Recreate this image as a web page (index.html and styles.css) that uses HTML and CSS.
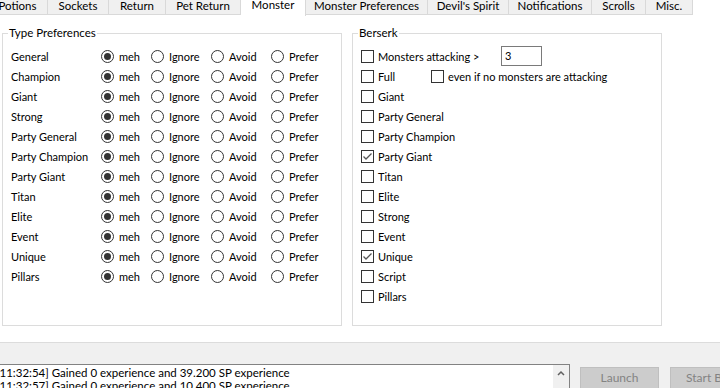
FILE: index.html
```html
<!DOCTYPE html>
<html lang="en">

<head>
    <meta charset="UTF-8">
    <meta name="viewport" content="width=device-width, initial-scale=1.0">
    <title>Bot Settings - Monster</title>
    <link rel="stylesheet" href="styles.css">
</head>

<body>
    <nav class="tabs">
        <div class="tab first">Potions</div>
        <div class="tab w61">Sockets</div>
        <div class="tab w57">Return</div>
        <div class="tab w75">Pet Return</div>
        <div class="tab active w65">Monster</div>
        <div class="tab w122">Monster Preferences</div>
        <div class="tab w81">Devil's Spirit</div>
        <div class="tab w83">Notifications</div>
        <div class="tab w54">Scrolls</div>
        <div class="tab w47">Misc.</div>
    </nav>

    <div class="page">
        <fieldset class="group types">
            <legend>Type Preferences</legend>
            <div class="pref"><span class="name">General</span><span class="opt o50"><i class="rb on"></i>meh</span><span class="opt"><i class="rb"></i>Ignore</span><span class="opt"><i class="rb"></i>Avoid</span><span class="opt"><i class="rb"></i>Prefer</span></div>
            <div class="pref"><span class="name">Champion</span><span class="opt o50"><i class="rb on"></i>meh</span><span class="opt"><i class="rb"></i>Ignore</span><span class="opt"><i class="rb"></i>Avoid</span><span class="opt"><i class="rb"></i>Prefer</span></div>
            <div class="pref"><span class="name">Giant</span><span class="opt o50"><i class="rb on"></i>meh</span><span class="opt"><i class="rb"></i>Ignore</span><span class="opt"><i class="rb"></i>Avoid</span><span class="opt"><i class="rb"></i>Prefer</span></div>
            <div class="pref"><span class="name">Strong</span><span class="opt o50"><i class="rb on"></i>meh</span><span class="opt"><i class="rb"></i>Ignore</span><span class="opt"><i class="rb"></i>Avoid</span><span class="opt"><i class="rb"></i>Prefer</span></div>
            <div class="pref"><span class="name">Party General</span><span class="opt o50"><i class="rb on"></i>meh</span><span class="opt"><i class="rb"></i>Ignore</span><span class="opt"><i class="rb"></i>Avoid</span><span class="opt"><i class="rb"></i>Prefer</span></div>
            <div class="pref"><span class="name">Party Champion</span><span class="opt o50"><i class="rb on"></i>meh</span><span class="opt"><i class="rb"></i>Ignore</span><span class="opt"><i class="rb"></i>Avoid</span><span class="opt"><i class="rb"></i>Prefer</span></div>
            <div class="pref"><span class="name">Party Giant</span><span class="opt o50"><i class="rb on"></i>meh</span><span class="opt"><i class="rb"></i>Ignore</span><span class="opt"><i class="rb"></i>Avoid</span><span class="opt"><i class="rb"></i>Prefer</span></div>
            <div class="pref"><span class="name">Titan</span><span class="opt o50"><i class="rb on"></i>meh</span><span class="opt"><i class="rb"></i>Ignore</span><span class="opt"><i class="rb"></i>Avoid</span><span class="opt"><i class="rb"></i>Prefer</span></div>
            <div class="pref"><span class="name">Elite</span><span class="opt o50"><i class="rb on"></i>meh</span><span class="opt"><i class="rb"></i>Ignore</span><span class="opt"><i class="rb"></i>Avoid</span><span class="opt"><i class="rb"></i>Prefer</span></div>
            <div class="pref"><span class="name">Event</span><span class="opt o50"><i class="rb on"></i>meh</span><span class="opt"><i class="rb"></i>Ignore</span><span class="opt"><i class="rb"></i>Avoid</span><span class="opt"><i class="rb"></i>Prefer</span></div>
            <div class="pref"><span class="name">Unique</span><span class="opt o50"><i class="rb on"></i>meh</span><span class="opt"><i class="rb"></i>Ignore</span><span class="opt"><i class="rb"></i>Avoid</span><span class="opt"><i class="rb"></i>Prefer</span></div>
            <div class="pref"><span class="name">Pillars</span><span class="opt o50"><i class="rb on"></i>meh</span><span class="opt"><i class="rb"></i>Ignore</span><span class="opt"><i class="rb"></i>Avoid</span><span class="opt"><i class="rb"></i>Prefer</span></div>
        </fieldset>

        <fieldset class="group berserk">
            <legend>Berserk</legend>
            <div class="row"><span class="check w140"><i class="cb"></i>Monsters attacking &gt;</span><span class="num">3</span></div>
            <div class="row"><span class="check w70"><i class="cb"></i>Full</span><span class="check"><i class="cb"></i>even if no monsters are attacking</span></div>
            <div class="row"><span class="check"><i class="cb"></i>Giant</span></div>
            <div class="row"><span class="check"><i class="cb"></i>Party General</span></div>
            <div class="row"><span class="check"><i class="cb"></i>Party Champion</span></div>
            <div class="row"><span class="check"><i class="cb on"><svg viewBox="0 0 11 11"><polyline points="1.5,5.5 4,8 9.5,2.5" /></svg></i>Party Giant</span></div>
            <div class="row"><span class="check"><i class="cb"></i>Titan</span></div>
            <div class="row"><span class="check"><i class="cb"></i>Elite</span></div>
            <div class="row"><span class="check"><i class="cb"></i>Strong</span></div>
            <div class="row"><span class="check"><i class="cb"></i>Event</span></div>
            <div class="row"><span class="check"><i class="cb on"><svg viewBox="0 0 11 11"><polyline points="1.5,5.5 4,8 9.5,2.5" /></svg></i>Unique</span></div>
            <div class="row"><span class="check"><i class="cb"></i>Script</span></div>
            <div class="row"><span class="check"><i class="cb"></i>Pillars</span></div>
        </fieldset>
    </div>

    <div class="bottom">
        <div class="log">
            <div class="lines">
                <div>[11:32:54] Gained 0 experience and 39.200 SP experience</div>
                <div>[11:32:57] Gained 0 experience and 10.400 SP experience</div>
            </div>
            <div class="scroll">
                <svg viewBox="0 0 16 10"><polyline points="5,7 8,4 11,7" /></svg>
            </div>
        </div>
        <button class="btn" disabled>Launch</button>
        <button class="btn" disabled>Start Bot</button>
    </div>
</body>

</html>
```

FILE: styles.css
```css
* {
    margin: 0;
    padding: 0;
    box-sizing: border-box;
}

body {
    width: 720px;
    height: 388px;
    overflow: hidden;
    background: #fff;
    color: #000;
    font-family: Lato, "Noto Sans", sans-serif;
    font-size: 11px;
}

/* tab strip */

.tabs {
    display: flex;
    height: 16px;
    overflow: hidden;
    font-size: 11.5px;
}

.tab {
    height: 15px;
    line-height: 12px;
    text-align: center;
    white-space: nowrap;
    background: #f0f0f0;
    border-right: 1px solid #d9d9d9;
    border-bottom: 1px solid #d9d9d9;
    flex-shrink: 0;
}

.tab.first {
    width: 60px;
    margin-left: -12px;
}

.tab.active {
    background: #fff;
    height: 16px;
    line-height: 10px;
    border-bottom: none;
}

.w47 { width: 47px; }
.w54 { width: 54px; }
.w57 { width: 57px; }
.w61 { width: 61px; }
.w65 { width: 65px; }
.w75 { width: 75px; }
.w81 { width: 81px; }
.w83 { width: 83px; }
.w122 { width: 122px; }

/* group boxes */

.page {
    display: flex;
    gap: 10px;
    padding: 10px 0 0 2px;
    height: 327px;
    border-bottom: 1px solid #dcdcdc;
}

.group {
    border: 1px solid #dcdcdc;
    padding: 6px 8px 0 8px;
    height: 300px;
}

.group legend {
    padding: 0 1px;
    margin-left: -3px;
    line-height: 14px;
    font-size: 11.5px;
}

.types {
    width: 340px;
}

.berserk {
    width: 310px;
}

.pref,
.row {
    display: flex;
    align-items: center;
    height: 20px;
    white-space: nowrap;
}

.pref .name {
    width: 90px;
}

.opt {
    display: flex;
    align-items: center;
    width: 60px;
}

.opt.o50 {
    width: 50px;
}

.rb {
    width: 13px;
    height: 13px;
    border: 1px solid #333;
    border-radius: 50%;
    margin-right: 5px;
    display: flex;
    align-items: center;
    justify-content: center;
    background: #fff;
    flex-shrink: 0;
}

.rb.on::after {
    content: "";
    width: 7px;
    height: 7px;
    border-radius: 50%;
    background: #333;
}

.check {
    display: flex;
    align-items: center;
}

.check.w140 { width: 140px; }
.check.w70 { width: 70px; }

.cb {
    width: 13px;
    height: 13px;
    border: 1px solid #333;
    margin-right: 4px;
    background: #fff;
    display: flex;
    flex-shrink: 0;
}

.cb svg {
    width: 11px;
    height: 11px;
    fill: none;
    stroke: #555;
    stroke-width: 1.3;
}

.num {
    width: 41px;
    height: 20px;
    border: 1px solid #7a7a7a;
    padding-left: 3px;
    line-height: 18px;
}

/* bottom strip */

.bottom {
    display: flex;
    align-items: flex-start;
    background: #f0f0f0;
    height: 45px;
    padding-top: 21px;
}

.log {
    display: flex;
    width: 576px;
    height: 40px;
    margin-left: -6px;
    border: 1px solid #828282;
    background: #fff;
    flex-shrink: 0;
}

.lines {
    flex: 1;
    padding: 1px 0 0 1px;
    line-height: 13px;
    white-space: nowrap;
    overflow: hidden;
    font-size: 11.5px;
}

.scroll {
    width: 16px;
    background: #f0f0f0;
}

.scroll svg {
    display: block;
    width: 16px;
    height: 12px;
    margin-top: 2px;
    fill: none;
    stroke: #606060;
    stroke-width: 1.5;
}

.btn {
    width: 79px;
    height: 24px;
    margin-top: 3px;
    margin-left: 10px;
    padding-bottom: 3px;
    background: #cccccc;
    border: 1px solid #bfbfbf;
    color: #838383;
    font-family: inherit;
    font-size: 12px;
    flex-shrink: 0;
}

.btn + .btn {
    margin-left: 11px;
}
```
